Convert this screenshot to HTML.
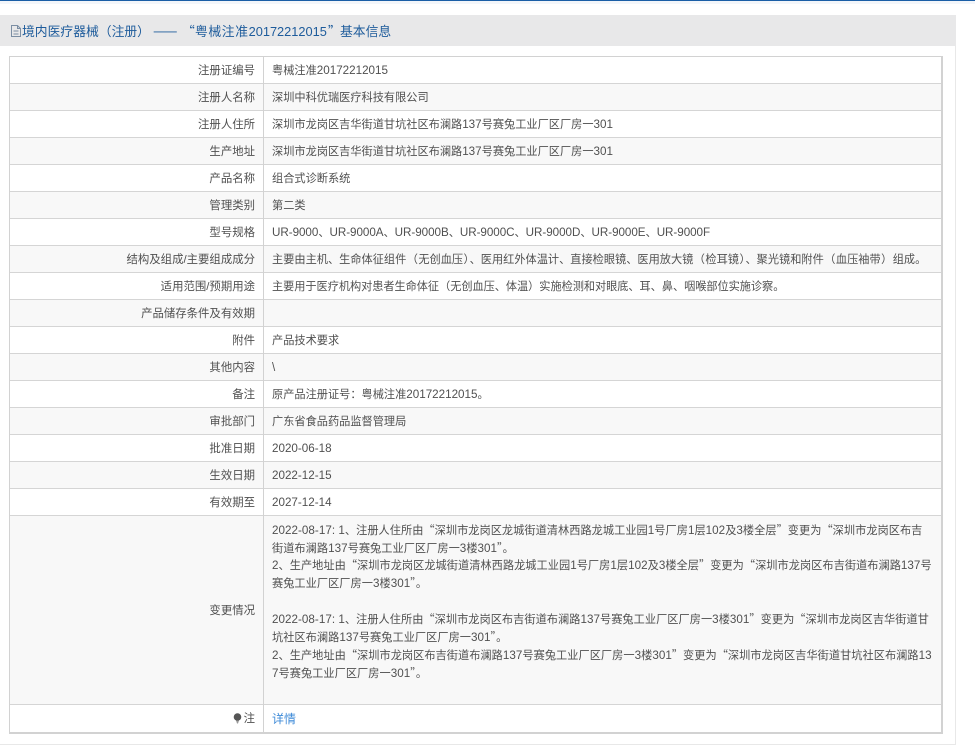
<!DOCTYPE html>
<html lang="zh-CN"><head><meta charset="utf-8"><style>
html,body{margin:0;padding:0;width:975px;height:746px;overflow:hidden;background:#fff}
body{position:relative;font-family:"Noto Sans CJK SC",sans-serif;font-size:11.2px;color:#505050}
div{position:absolute;white-space:nowrap}
i{font-family:"Liberation Sans",sans-serif;font-style:normal;font-size:11.65px}
u{text-decoration:none;margin:0 .45px}
.h{top:22px;line-height:18px;font-size:12.8px;color:#1d5b9b}
.h i{font-size:12.8px}
.r{left:10px;width:931px;border-bottom:1px solid #d5d5d5}
.o{background:#f8f8f8}
.l{left:10px;width:245px;text-align:right;line-height:16px;font-size:11.4px}
.l i{font-size:11.4px}
.v{left:272px;line-height:16px}
.c{letter-spacing:.03px}
</style></head><body>
<div style="left:0;top:0;width:975px;height:1px;background:#1a5ea6"></div>
<div style="left:0;top:1px;width:975px;height:3px;background:#f3f6fa"></div>
<div style="left:0;top:15px;width:956px;height:31px;background:#e8e8e9"></div>
<div style="left:955px;top:46px;width:1px;height:698px;background:#e8e8e8"></div>
<div style="left:0;top:744px;width:956px;height:1px;background:#e8e8e8"></div>
<svg style="position:absolute;left:10px;top:24px" width="12" height="14" viewBox="0 0 12 14"><path d="M1.5 1.5H7.5L10.5 4.5V12.5H1.5Z M7.5 1.5V4.5H10.5 M3.5 7H8.5 M3.5 10H8.5" fill="none" stroke="#7b8ea3" stroke-width="1"/></svg>
<div class="h" style="left:22px">境内医疗器械（注册）</div>
<div class="h" style="left:153px;font-size:14.6px">——</div>
<div class="h" style="left:182px">“</div>
<div class="h" style="left:195px"><span style="letter-spacing:.6px">粤械注准</span><i>20172212015</i></div>
<div class="h" style="left:328px">”</div>
<div class="h" style="left:340px">基本信息</div>

<div style="left:9px;top:56px;width:934px;height:678px;box-sizing:border-box;border:1px solid #d2d2d2;border-right-width:2px;border-bottom-width:2px"></div>
<div class="r" style="top:57px;height:26px"></div>
<div class="r o" style="top:84px;height:26px"></div>
<div class="r" style="top:111px;height:26px"></div>
<div class="r o" style="top:138px;height:26px"></div>
<div class="r" style="top:165px;height:26px"></div>
<div class="r o" style="top:192px;height:26px"></div>
<div class="r" style="top:219px;height:26px"></div>
<div class="r o" style="top:246px;height:26px"></div>
<div class="r" style="top:273px;height:26px"></div>
<div class="r o" style="top:300px;height:26px"></div>
<div class="r" style="top:327px;height:26px"></div>
<div class="r o" style="top:354px;height:26px"></div>
<div class="r" style="top:381px;height:26px"></div>
<div class="r o" style="top:408px;height:26px"></div>
<div class="r" style="top:435px;height:26px"></div>
<div class="r o" style="top:462px;height:26px"></div>
<div class="r" style="top:489px;height:26px"></div>
<div class="r o" style="top:516px;height:188px"></div>
<div style="left:263px;top:57px;width:1px;height:676px;background:#d2d2d2"></div>

<div class="l" style="top:62px">注册证编号</div><div class="v" style="top:62px">粤械注准<i>20172212015</i></div>
<div class="l" style="top:89px">注册人名称</div><div class="v" style="top:89px">深圳中科优瑞医疗科技有限公司</div>
<div class="l" style="top:116px">注册人住所</div><div class="v" style="top:116px">深圳市龙岗区吉华街道甘坑社区布澜路<i>137</i>号赛兔工业厂区厂房一<i>301</i></div>
<div class="l" style="top:143px">生产地址</div><div class="v" style="top:143px">深圳市龙岗区吉华街道甘坑社区布澜路<i>137</i>号赛兔工业厂区厂房一<i>301</i></div>
<div class="l" style="top:170px">产品名称</div><div class="v" style="top:170px">组合式诊断系统</div>
<div class="l" style="top:197px">管理类别</div><div class="v" style="top:197px">第二类</div>
<div class="l" style="top:224px">型号规格</div><div class="v" style="top:224px;letter-spacing:-.04px"><i>UR-9000</i>、<i>UR-9000A</i>、<i>UR-9000B</i>、<i>UR-9000C</i>、<i>UR-9000D</i>、<i>UR-9000E</i>、<i>UR-9000F</i></div>
<div class="l" style="top:251px">结构及组成<i>/</i>主要组成成分</div><div class="v" style="top:251px">主要由主机、生命体征组件<u>（</u>无创血压<u>）</u>、医用红外体温计、直接检眼镜、医用放大镜<u>（</u>检耳镜<u>）</u>、聚光镜和附件<u>（</u>血压袖带<u>）</u>组成。</div>
<div class="l" style="top:278px">适用范围<i>/</i>预期用途</div><div class="v" style="top:278px;letter-spacing:-.05px">主要用于医疗机构对患者生命体征（无创血压、体温）实施检测和对眼底、耳、鼻、咽喉部位实施诊察。</div>
<div class="l" style="top:305px">产品储存条件及有效期</div>
<div class="l" style="top:332px">附件</div><div class="v" style="top:332px">产品技术要求</div>
<div class="l" style="top:359px">其他内容</div><div class="v" style="top:359px"><i>\</i></div>
<div class="l" style="top:386px">备注</div><div class="v" style="top:386px">原产品注册证号：粤械注准<i>20172212015</i>。</div>
<div class="l" style="top:413px">审批部门</div><div class="v" style="top:413px">广东省食品药品监督管理局</div>
<div class="l" style="top:440px">批准日期</div><div class="v" style="top:440px"><i>2020-06-18</i></div>
<div class="l" style="top:467px">生效日期</div><div class="v" style="top:467px"><i>2022-12-15</i></div>
<div class="l" style="top:494px">有效期至</div><div class="v" style="top:494px"><i>2027-12-14</i></div>
<div class="l" style="top:602px">变更情况</div>

<div class="v c" style="top:522px"><i>2022-08-17: 1</i>、注册人住所由“深圳市龙岗区龙城街道清林西路龙城工业园<i>1</i>号厂房<i>1</i>层<i>102</i>及<i>3</i>楼全层”变更为“深圳市龙岗区布吉</div>
<div class="v c" style="top:540px">街道布澜路<i>137</i>号赛兔工业厂区厂房一<i>3</i>楼<i>301</i>”。</div>
<div class="v c" style="top:557px"><i>2</i>、生产地址由“深圳市龙岗区龙城街道清林西路龙城工业园<i>1</i>号厂房<i>1</i>层<i>102</i>及<i>3</i>楼全层”变更为“深圳市龙岗区布吉街道布澜路<i>137</i>号</div>
<div class="v c" style="top:575px">赛兔工业厂区厂房一<i>3</i>楼<i>301</i>”。</div>
<div class="v c" style="top:611px"><i>2022-08-17: 1</i>、注册人住所由“深圳市龙岗区布吉街道布澜路<i>137</i>号赛兔工业厂区厂房一<i>3</i>楼<i>301</i>”变更为“深圳市龙岗区吉华街道甘</div>
<div class="v c" style="top:629px">坑社区布澜路<i>137</i>号赛兔工业厂区厂房一<i>301</i>”。</div>
<div class="v c" style="top:647px"><i>2</i>、生产地址由“深圳市龙岗区布吉街道布澜路<i>137</i>号赛兔工业厂区厂房一<i>3</i>楼<i>301</i>”变更为“深圳市龙岗区吉华街道甘坑社区布澜路<i>13</i></div>
<div class="v c" style="top:665px"><i>7</i>号赛兔工业厂区厂房一<i>301</i>”。</div>

<svg style="position:absolute;left:233px;top:713px" width="10" height="12" viewBox="0 0 10 12"><circle cx="4.5" cy="4" r="3.8" fill="#555"/><path d="M3 7.5H6L5 10.5H4Z" fill="#999"/></svg>
<div class="l" style="top:710px">注</div>
<div class="v" style="top:711px;font-size:12px;color:#3f8bd8">详情</div>
</body></html>
